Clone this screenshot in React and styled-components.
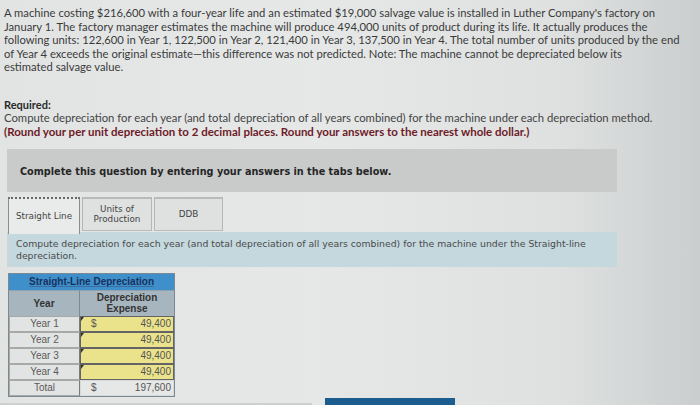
import React from 'react';
import styled, { createGlobalStyle } from 'styled-components';

const GlobalStyle = createGlobalStyle`
  html, body {
    margin: 0;
    padding: 0;
  }
  body {
    width: 700px;
    height: 405px;
    overflow: hidden;
    background: linear-gradient(90deg, #e2e4e4 0%, #e6e8e8 45%, #dfe1e1 80%, #cbcece 100%);
  }
`;

const Page = styled.div`
  padding: 6px 0 0 4px;
  color: #333;
`;

const Intro = styled.div`
  font-family: Lato, 'Open Sans', sans-serif;
  font-size: 11.25px;
  line-height: 13.6px;
  color: #3a3a3a;
  white-space: nowrap;
`;

const RequiredBlock = styled.div`
  margin-top: 24px;
  font-family: Lato, 'Open Sans', sans-serif;
  line-height: 13.3px;
  white-space: nowrap;
`;

const RequiredLabel = styled.div`
  font-size: 11px;
  font-weight: bold;
  color: #2a2a2a;
`;

const RequiredText = styled.div`
  font-size: 11.3px;
  color: #444;
`;

const RoundNote = styled.div`
  font-size: 11.5px;
  font-weight: bold;
  color: #6e1b28;
`;

const Instruction = styled.div`
  margin: 11px 0 0 3px;
  width: 610px;
  height: 43px;
  box-sizing: border-box;
  padding: 17px 0 0 13px;
  background: #c9cbcb;
  font-family: 'DejaVu Sans', Verdana, sans-serif;
  font-size: 9.7px;
  font-weight: bold;
  color: #262626;
`;

const TabRow = styled.div`
  display: flex;
  gap: 2px;
  margin: 5px 0 0 4px;
  height: 36px;
  align-items: flex-start;
`;

const Tab = styled.div`
  width: ${p => p.w}px;
  height: ${p => (p.active ? 37 : 34)}px;
  box-sizing: border-box;
  display: flex;
  align-items: center;
  justify-content: center;
  text-align: center;
  font-family: 'DejaVu Sans', Verdana, sans-serif;
  font-size: 8.8px;
  line-height: 10.5px;
  color: #444;
  background: ${p => (p.active ? '#e9ebeb' : '#dfe1e1')};
  border: 1px solid ${p => (p.active ? '#8a8c8c' : '#b5b7b7')};
  border-top: 2px ${p => (p.active ? 'dotted #666' : 'solid #b9bbbb')};
  border-bottom: ${p => (p.active ? 'none' : '1px solid #b9bbbb')};
  position: relative;
  z-index: ${p => (p.active ? 1 : 0)};
`;

const TabPanel = styled.div`
  margin: -1px 0 0 3px;
  width: 610px;
  height: 35px;
  box-sizing: border-box;
  padding: 6px 0 0 9px;
  background: #c4d8de;
  font-family: 'DejaVu Sans', Verdana, sans-serif;
  font-size: 9.3px;
  line-height: 12px;
  color: #4a4a4a;
  white-space: nowrap;
`;

const Grid = styled.div`
  margin: 6px 0 0 4px;
  width: 167px;
  display: grid;
  grid-template-columns: 71px 94px;
  grid-template-rows: 16px 26px repeat(5, 16px);
  font-family: 'Liberation Sans', Arial, sans-serif;
  font-size: 10px;
  border: 1px solid #7b8a92;
  box-sizing: border-box;
`;

const TitleCell = styled.div`
  grid-column: 1 / 3;
  background: #3f8fcb;
  color: #18325e;
  font-weight: bold;
  display: flex;
  align-items: center;
  justify-content: center;
  text-decoration: underline;
  text-decoration-color: #3a6ea0;
`;

const HeadCell = styled.div`
  background: #a7b6be;
  color: #333;
  font-weight: bold;
  display: flex;
  align-items: center;
  justify-content: center;
  text-align: center;
  line-height: 11px;
  border-top: 1px solid #8fa2ad;
  border-right: ${p => (p.first ? '1px solid #7d8a90' : 'none')};
`;

const LabelCell = styled.div`
  background: #e2e3e3;
  color: #5a5a5a;
  display: flex;
  align-items: center;
  justify-content: center;
  box-sizing: border-box;
  border: 1px solid #a8a8a8;
  border-right: 1px solid #7b7b7b;
`;

const ValueCell = styled.div`
  position: relative;
  background: ${p => (p.total ? '#e6e7e7' : '#ebe28c')};
  border: 1px solid ${p => (p.total ? '#d8d8d8' : '#646464')};
  box-sizing: border-box;
  display: flex;
  align-items: center;
  justify-content: space-between;
  padding: 0 2px 0 10px;
  color: #555;

  &::before {
    content: '';
    display: ${p => (p.total ? 'none' : 'block')};
    position: absolute;
    top: 0;
    left: 0;
    border-top: 4px solid #333;
    border-right: 3px solid transparent;
  }
`;

const Footer = styled.div`
  display: flex;
  align-items: flex-end;
  height: 9px;
  margin-left: -4px;
`;

const GrayLine = styled.div`
  width: 312px;
  height: 3px;
  background: #cdd0d0;
`;

const BlueBar = styled.div`
  margin-left: 13px;
  width: 130px;
  height: 8px;
  background: #1b5d8f;
`;

const introLines = [
  "A machine costing $216,600 with a four-year life and an estimated $19,000 salvage value is installed in Luther Company's factory on",
  'January 1. The factory manager estimates the machine will produce 494,000 units of product during its life. It actually produces the',
  'following units: 122,600 in Year 1, 122,500 in Year 2, 121,400 in Year 3, 137,500 in Year 4. The total number of units produced by the end',
  'of Year 4 exceeds the original estimate—this difference was not predicted. Note: The machine cannot be depreciated below its',
  'estimated salvage value.',
];

const rows = [
  { year: 'Year 1', dollar: true, value: '49,400' },
  { year: 'Year 2', dollar: false, value: '49,400' },
  { year: 'Year 3', dollar: false, value: '49,400' },
  { year: 'Year 4', dollar: false, value: '49,400' },
];

export default function App() {
  return (
    <>
      <GlobalStyle />
      <Page>
        <Intro>
          {introLines.map(line => (
            <div key={line}>{line}</div>
          ))}
        </Intro>
        <RequiredBlock>
          <RequiredLabel>Required:</RequiredLabel>
          <RequiredText>
            Compute depreciation for each year (and total depreciation of all years combined) for the machine under each depreciation method.
          </RequiredText>
          <RoundNote>
            (Round your per unit depreciation to 2 decimal places. Round your answers to the nearest whole dollar.)
          </RoundNote>
        </RequiredBlock>
        <Instruction>Complete this question by entering your answers in the tabs below.</Instruction>
        <TabRow>
          <Tab w={72} active>Straight Line</Tab>
          <Tab w={70}>Units of<br />Production</Tab>
          <Tab w={69}>DDB</Tab>
        </TabRow>
        <TabPanel>
          Compute depreciation for each year (and total depreciation of all years combined) for the machine under the Straight-line
          <br />
          depreciation.
        </TabPanel>
        <Grid>
          <TitleCell>Straight-Line Depreciation</TitleCell>
          <HeadCell first>Year</HeadCell>
          <HeadCell>Depreciation<br />Expense</HeadCell>
          {rows.map(r => (
            <React.Fragment key={r.year}>
              <LabelCell>{r.year}</LabelCell>
              <ValueCell>
                <span>{r.dollar ? '$' : ''}</span>
                <span>{r.value}</span>
              </ValueCell>
            </React.Fragment>
          ))}
          <LabelCell>Total</LabelCell>
          <ValueCell total>
            <span>$</span>
            <span>197,600</span>
          </ValueCell>
        </Grid>
        <Footer>
          <GrayLine />
          <BlueBar />
        </Footer>
      </Page>
    </>
  );
}
